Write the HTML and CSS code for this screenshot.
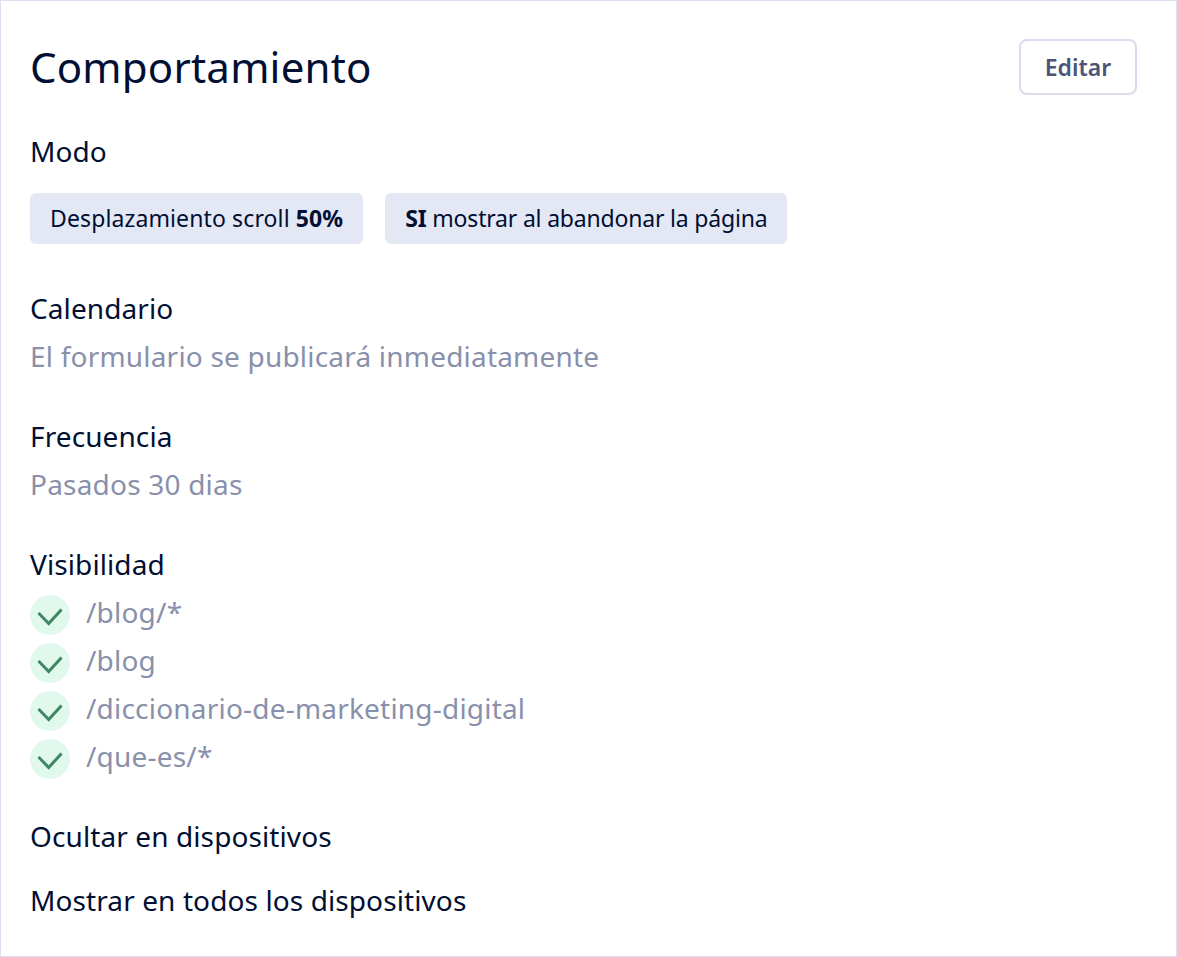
FILE: index.html
```html
<!DOCTYPE html>
<html lang="es">

<head>
    <meta charset="UTF-8">
    <title>Comportamiento</title>
    <link rel="stylesheet" href="styles.css">
</head>

<body>
    <section class="card">
        <header class="card-header">
            <h1 class="card-title">Comportamiento</h1>
            <button class="button">Editar</button>
        </header>

        <div class="group group-mode">
            <div class="label">Modo</div>
            <div class="tags">
                <span class="tag tag-wide">Desplazamiento scroll <b>50%</b></span>
                <span class="tag tag-narrow"><b>SI</b> mostrar al abandonar la página</span>
            </div>
        </div>

        <div class="group">
            <div class="label">Calendario</div>
            <div class="value">El formulario se publicará inmediatamente</div>
        </div>

        <div class="group">
            <div class="label">Frecuencia</div>
            <div class="value">Pasados 30 dias</div>
        </div>

        <div class="group">
            <div class="label">Visibilidad</div>
            <ul class="paths">
                <li class="path">
                    <svg class="check" viewBox="0 0 40 40"><circle cx="20" cy="20" r="20" fill="#e1f8ec"/><path d="M8.500 18L18.700 28.500L31.500 14.500" fill="none" stroke="#3d8763" stroke-width="3"/></svg>
                    <span class="value">/blog/*</span>
                </li>
                <li class="path">
                    <svg class="check" viewBox="0 0 40 40"><circle cx="20" cy="20" r="20" fill="#e1f8ec"/><path d="M8.500 18L18.700 28.500L31.500 14.500" fill="none" stroke="#3d8763" stroke-width="3"/></svg>
                    <span class="value">/blog</span>
                </li>
                <li class="path">
                    <svg class="check" viewBox="0 0 40 40"><circle cx="20" cy="20" r="20" fill="#e1f8ec"/><path d="M8.500 18L18.700 28.500L31.500 14.500" fill="none" stroke="#3d8763" stroke-width="3"/></svg>
                    <span class="value">/diccionario-de-marketing-digital</span>
                </li>
                <li class="path">
                    <svg class="check" viewBox="0 0 40 40"><circle cx="20" cy="20" r="20" fill="#e1f8ec"/><path d="M8.500 18L18.700 28.500L31.500 14.500" fill="none" stroke="#3d8763" stroke-width="3"/></svg>
                    <span class="value">/que-es/*</span>
                </li>
            </ul>
        </div>

        <div class="group group-devices">
            <div class="label">Ocultar en dispositivos</div>
            <div class="label label-last">Mostrar en todos los dispositivos</div>
        </div>
    </section>
</body>

</html>
```

FILE: styles.css
```css
* {
    box-sizing: border-box;
}

html,
body {
    height: 100%;
}

body {
    margin: 0;
    font-family: 'Noto Sans', Arial, sans-serif;
    color: #010f33;
    background: #fff;
}

.card {
    height: 957px;
    padding: 37px 39px 0 29px;
    border: 1px solid #dcdff0;
    background: #fff;
}

.card-header {
    display: flex;
    justify-content: space-between;
    align-items: center;
    height: 58px;
}

.card-title {
    margin: 0;
    font-size: 42px;
    font-weight: 400;
    letter-spacing: 0.2px;
    line-height: 56px;
}

.button {
    width: 118px;
    height: 56px;
    background: #fff;
    border: 2px solid #d8dcec;
    border-radius: 8px;
    color: #4a5578;
    font-family: 'Noto Sans', Arial, sans-serif;
    font-size: 23px;
    font-weight: 600;
}

.group {
    margin-top: 32px;
}

.group-mode {
    margin-top: 31px;
    margin-bottom: 40px;
}

.label {
    font-size: 28px;
    letter-spacing: 0.1px;
    line-height: 48px;
}

.label-last {
    margin-top: 16px;
}

.tags {
    display: flex;
    gap: 22px;
    margin-top: 18px;
}

.tag {
    padding: 0 20px;
    height: 51px;
    background: #e4e8f5;
    border-radius: 6px;
    font-size: 23px;
    line-height: 50px;
}

.tag-wide {
    letter-spacing: 0.12px;
}

.tag-narrow {
    letter-spacing: -0.19px;
}

.value {
    color: #8890ab;
    font-size: 28px;
    letter-spacing: 0.2px;
    line-height: 48px;
}

.paths {
    list-style: none;
    margin: 0;
    padding: 0;
}

.path {
    display: flex;
    align-items: center;
    gap: 16px;
    height: 48px;
}

.check {
    width: 40px;
    height: 40px;
    flex: none;
    margin-top: 6px;
}

.group-devices {
    margin-top: 32px;
}
```
